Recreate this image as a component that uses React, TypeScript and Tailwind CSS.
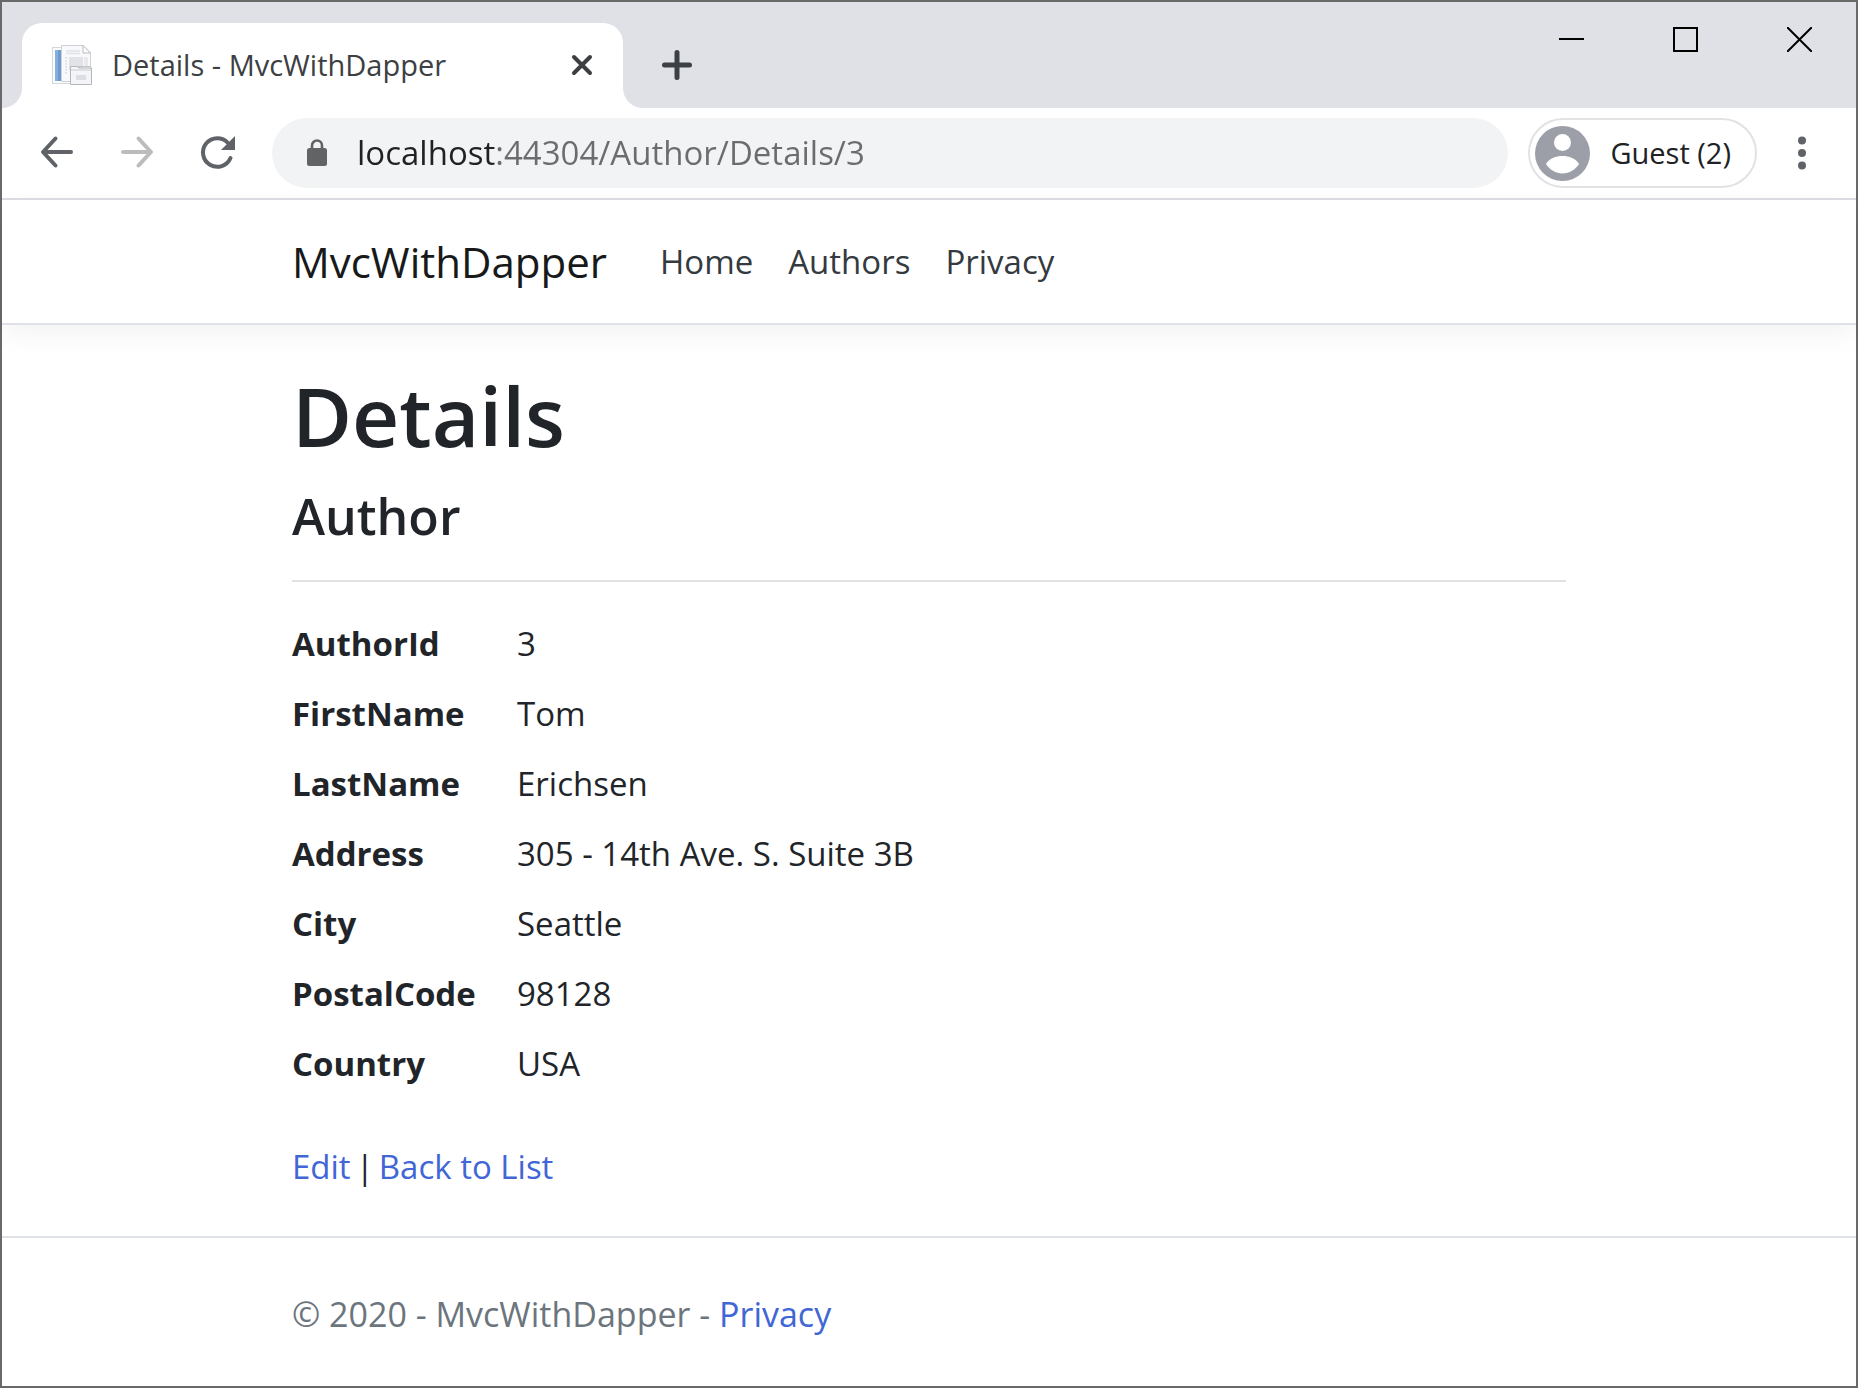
import React from "react";

const details = [
  ["AuthorId", "3"],
  ["FirstName", "Tom"],
  ["LastName", "Erichsen"],
  ["Address", "305 - 14th Ave. S. Suite 3B"],
  ["City", "Seattle"],
  ["PostalCode", "98128"],
  ["Country", "USA"],
];

function PageIcon() {
  return (
    <svg width="40" height="40" viewBox="0 0 40 40" aria-hidden="true" className="shrink-0">
      <rect x="0.5" y="2.5" width="20" height="36" fill="#fbfbfc" stroke="#d3d6da" />
      <rect x="3" y="5" width="7" height="31" fill="#6a9bd1" />
      <rect x="3" y="5" width="3" height="31" fill="#84aedb" />
      <path d="M9.5 0.5H31L38.5 8V36.5H9.5Z" fill="#f9f9fb" stroke="#d0d1d4" />
      <path d="M31 0.5V8H38.5Z" fill="#fff" stroke="#b9babd" />
      <path d="M14 6H28M14 8.500H28" stroke="#dfe1e6" strokeWidth="1.500" />
      <path d="M14 12V30" stroke="#e3e5e9" strokeWidth="2" strokeDasharray="2 1" />
      <rect x="17" y="12" width="14" height="14" fill="#e1e3e8" />
      <rect x="32" y="12" width="4" height="9" fill="#e8e9ed" />
      <path d="M18.500 39.500V21.500H25L27 23H39.500V39.500Z" fill="#f4f5f8" stroke="#b4b6ba" />
      <path d="M19 25H39" stroke="#c9cbd0" />
      <path d="M26 21.500H38.500V24" fill="none" stroke="#c3c5c9" />
      <rect x="24" y="30" width="10" height="5" fill="#dcdee4" />
    </svg>
  );
}

function BackIcon() {
  return (
    <svg width="40" height="40" viewBox="0 0 40 40" fill="none" stroke="currentColor" strokeWidth="4" strokeLinecap="round" strokeLinejoin="round" aria-hidden="true">
      <path d="M34 19H6.500M18.500 5.500L6 19L18.500 32.500" />
    </svg>
  );
}

function ForwardIcon() {
  return (
    <svg width="40" height="40" viewBox="0 0 40 40" fill="none" stroke="currentColor" strokeWidth="4" strokeLinecap="round" strokeLinejoin="round" aria-hidden="true">
      <path d="M6 19H33.500M21.500 5.500L34 19L21.500 32.500" />
    </svg>
  );
}

function ReloadIcon() {
  return (
    <svg width="40" height="40" viewBox="0 0 40 40" fill="none" aria-hidden="true">
      <path d="M33.500 25A14.300 14.300 0 1 1 31 10" stroke="currentColor" strokeWidth="4" strokeLinecap="round" />
      <path d="M38 3V17H24Z" fill="currentColor" />
    </svg>
  );
}

function LockIcon() {
  return (
    <svg width="20" height="28" viewBox="0 0 20 28" fill="none" aria-hidden="true" className="shrink-0 text-[#616365]">
      <rect x="0" y="9" width="20" height="18" rx="2.500" fill="currentColor" />
      <path d="M5 10V6.500A5 5 0 0 1 15 6.500V10" stroke="currentColor" strokeWidth="2.600" />
    </svg>
  );
}

function AvatarIcon() {
  return (
    <svg width="55" height="55" viewBox="0 0 55 55" aria-hidden="true">
      <circle cx="27.500" cy="27.500" r="27.500" fill="#9c9fa8" />
      <circle cx="27.500" cy="16.500" r="8.500" fill="#fff" />
      <path d="M11 38C14 32.500 21 30 27.500 30S41 32.500 44 38C40.500 43.500 34.500 47.500 27.500 47.500S14.500 43.500 11 38Z" fill="#fff" />
    </svg>
  );
}

function TabStrip() {
  return (
    <div className="flex h-[106px] bg-[#dfe1e6]">
      <div className="w-5 bg-white">
        <div className="h-full rounded-br-[20px] bg-[#dfe1e6]" />
      </div>
      <div className="w-[601px] pt-[21px]">
        <div className="flex h-full items-start rounded-t-[20px] bg-white pr-[21px] pl-[30px]">
          <div className="flex h-[84px] flex-1 items-center gap-[20px]">
            <PageIcon />
            <span className="text-[29px] leading-[40px] text-[#3c4043]">Details - MvcWithDapper</span>
          </div>
          <button type="button" aria-label="Close tab" className="flex h-[84px] w-[40px] items-center justify-center text-[#3c4043]">
            <svg width="24" height="24" viewBox="0 0 24 24" stroke="currentColor" strokeWidth="4" strokeLinecap="round" aria-hidden="true">
              <path d="M4 4L20 20M20 4L4 20" />
            </svg>
          </button>
        </div>
      </div>
      <div className="flex-1 bg-white">
        <div className="flex h-full items-start justify-between rounded-bl-[20px] bg-[#dfe1e6] pl-[34px]">
          <button type="button" aria-label="New tab" className="mt-[43px] flex size-[40px] items-center justify-center text-[#3c4043]">
            <svg width="30" height="30" viewBox="0 0 30 30" stroke="currentColor" strokeWidth="5" strokeLinecap="round" aria-hidden="true">
              <path d="M15 2.500V27.500M2.500 15H27.500" />
            </svg>
          </button>
          <div className="flex h-[75px] text-black">
            <button type="button" aria-label="Minimize" className="flex w-[114px] items-center justify-center">
              <svg width="25" height="25" viewBox="0 0 25 25" stroke="currentColor" strokeWidth="2" aria-hidden="true">
                <path d="M0 12H25" />
              </svg>
            </button>
            <button type="button" aria-label="Maximize" className="flex w-[114px] items-center justify-center">
              <svg width="25" height="25" viewBox="0 0 25 25" fill="none" stroke="currentColor" strokeWidth="2" aria-hidden="true">
                <rect x="1" y="1" width="23" height="23" />
              </svg>
            </button>
            <button type="button" aria-label="Close" className="flex w-[114px] items-center justify-center">
              <svg width="25" height="25" viewBox="0 0 25 25" stroke="currentColor" strokeWidth="2" aria-hidden="true">
                <path d="M0 0L25 25M25 0L0 25" />
              </svg>
            </button>
          </div>
        </div>
      </div>
    </div>
  );
}

function Toolbar() {
  return (
    <div className="flex h-[92px] items-center border-b-2 border-[#dcdde2] bg-white pr-[19px] pl-[15px] text-[#5f6368]">
      <button type="button" aria-label="Back" className="flex h-[70px] w-[80px] items-center justify-center">
        <BackIcon />
      </button>
      <button type="button" aria-label="Forward" className="flex h-[70px] w-[80px] items-center justify-center text-[#babcbe]">
        <ForwardIcon />
      </button>
      <button type="button" aria-label="Reload" className="flex h-[70px] w-[80px] items-center justify-center">
        <ReloadIcon />
      </button>
      <label className="mr-[20px] ml-[15px] flex h-[70px] flex-1 items-center gap-[30px] rounded-full bg-[#f1f3f4] px-[35px]">
        <LockIcon />
        <input
          type="text"
          aria-label="Address"
          defaultValue="localhost:44304/Author/Details/3"
          className="h-[52px] min-w-0 flex-1 bg-[linear-gradient(90deg,#202124_138px,#6a6c6f_138px)] bg-clip-text text-[33px] text-transparent outline-none"
        />
      </label>
      <button type="button" className="mr-[10px] flex h-[70px] items-center gap-[20px] rounded-full border-2 border-[#e1e2e3] pr-[24px] pl-[5px] text-[29px] text-[#202124]">
        <AvatarIcon />
        Guest (2)
      </button>
      <button type="button" aria-label="Menu" className="flex h-[70px] w-[70px] items-center justify-center">
        <svg width="10" height="34" viewBox="0 0 10 34" fill="currentColor" aria-hidden="true">
          <circle cx="5" cy="4.500" r="4" />
          <circle cx="5" cy="17" r="4" />
          <circle cx="5" cy="29.500" r="4" />
        </svg>
      </button>
    </div>
  );
}

export default function App() {
  return (
    <div className="flex min-h-screen flex-col border-2 border-[#696969] bg-white font-['Open_Sans',sans-serif] text-[33px] leading-[52px] text-[#212529]">
      <TabStrip />
      <Toolbar />
      <header className="border-b-2 border-[#dee2e6] shadow-[0_9px_26px_rgba(0,0,0,0.05)]">
        <nav className="mx-auto flex h-[123px] w-full max-w-[1350px] items-center px-[38px]">
          <a href="#" className="mr-[53px] text-[42px] text-[#18191a]">MvcWithDapper</a>
          <div className="flex gap-[35px] text-[#343a40]">
            <a href="#home">Home</a>
            <a href="#authors">Authors</a>
            <a href="#privacy">Privacy</a>
          </div>
        </nav>
      </header>
      <main className="mx-auto w-full max-w-[1350px] px-[38px] pt-[38px]">
        <h1 className="text-[82px] leading-[105px] font-semibold">Details</h1>
        <h2 className="mt-[17px] text-[50px] leading-[63px] font-semibold">Author</h2>
        <hr className="mt-[32px] border-t-2 border-[#e1e1e1]" />
        <dl className="mt-[36px] grid grid-cols-[225px_1fr] gap-y-[18px]">
          {details.map(([term, value]) => (
            <React.Fragment key={term}>
              <dt className="font-bold">{term}</dt>
              <dd>{value}</dd>
            </React.Fragment>
          ))}
        </dl>
        <p className="mt-[51px] flex gap-[5px]">
          <a href="#edit" className="text-[#4166d5]">Edit</a>
          <span>|</span>
          <a href="#list" className="text-[#4166d5]">Back to List</a>
        </p>
      </main>
      <footer className="mt-[43px] border-t-2 border-[#dee2e6] text-[34px] text-[#6c757d]">
        <div className="mx-auto w-full max-w-[1350px] px-[38px] pt-[50px]">
          © 2020 - MvcWithDapper - <a href="#privacy" className="text-[#4166d5]">Privacy</a>
        </div>
      </footer>
    </div>
  );
}
